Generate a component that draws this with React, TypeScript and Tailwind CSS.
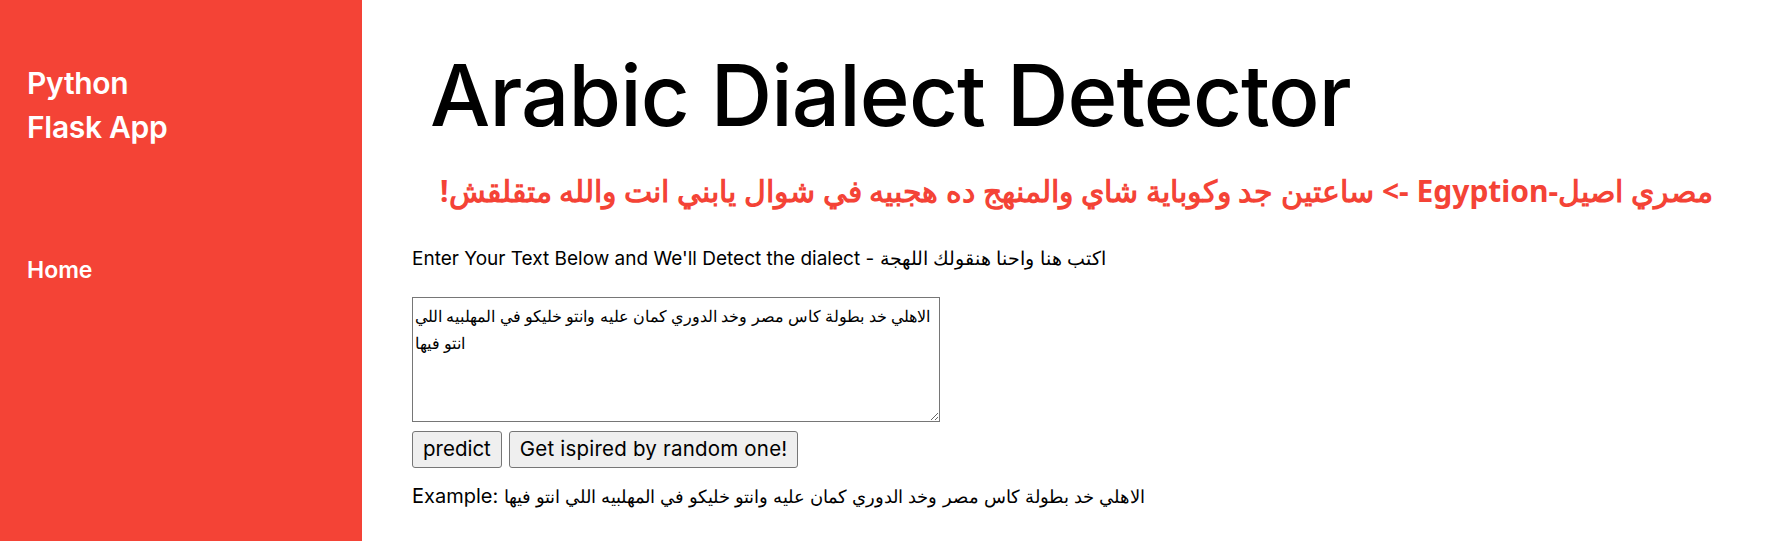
import { useState } from 'react';

const sample =
  'الاهلي خد بطولة كاس مصر وخد الدوري كمان عليه وانتو خليكو في المهلبيه اللي انتو فيها';

export default function App() {
  const [text, setText] = useState(sample);

  return (
    <div className="flex min-h-[541px] w-full bg-white font-['Inter',sans-serif] text-black">
      {/* sidebar */}
      <aside className="w-[362px] shrink-0 bg-[#f44336] px-[27px] pt-[61px] text-white">
        <h2 className="text-[30px] leading-[44px] font-semibold tracking-[-0.01em]">
          Python
          <br />
          Flask App
        </h2>
        <nav className="mt-[104px]">
          <a href="#" className="text-[23px] font-semibold">
            Home
          </a>
        </nav>
      </aside>

      {/* main */}
      <main className="flex-1 pr-[72px] pl-[50px]">
        <h1 className="mt-[48px] pl-[18px] text-[85px] leading-[96px] font-medium tracking-[-0.01em]">
          Arabic Dialect Detector
        </h1>
        <p
          dir="rtl"
          className="mt-[25px] font-['Noto_Sans',sans-serif] text-[30px] leading-[44px] font-bold text-[#f44336]"
        >
          مصري اصيل-Egyption -&gt; ساعتين جد وكوباية شاي والمنهج ده هجبيه في شوال يابني انت والله متقلقش!
        </p>

        <form className="mt-[34px] flex flex-col" onSubmit={(e) => e.preventDefault()}>
          <label className="text-[19px] leading-[24px]">
            Enter Your Text Below and We'll Detect the dialect - اكتب هنا واحنا هنقولك اللهجة
          </label>
          <textarea
            value={text}
            onChange={(e) => setText(e.target.value)}
            className="mt-[26px] h-[125px] w-[528px] resize border border-[#767676] px-[2px] pt-[5px] font-['Liberation_Sans',sans-serif] text-[15.5px] leading-[27px]"
          />
          <div className="mt-[9px] flex gap-[7px]">
            <button className="h-[37px] rounded-[3px] border border-[#767676] bg-[#efefef] px-[10px] text-[20.5px]">
              predict
            </button>
            <button
              type="button"
              onClick={() => setText(sample)}
              className="h-[37px] rounded-[3px] border border-[#767676] bg-[#efefef] px-[10px] text-[20.5px] tracking-[0.01em]"
            >
              Get ispired by random one!
            </button>
          </div>
          <p className="mt-[14px] text-[20px] leading-[28px]">
            Example: <span className="text-[18px]">{sample}</span>
          </p>
        </form>
      </main>
    </div>
  );
}
